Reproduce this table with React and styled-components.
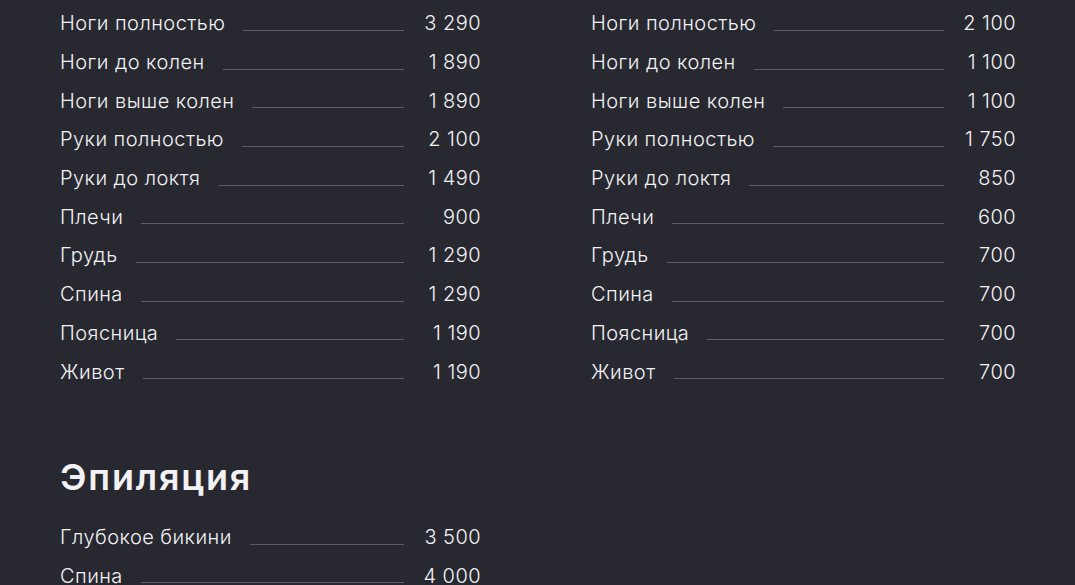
import React from "react";
import styled, { createGlobalStyle } from "styled-components";

const GlobalStyle = createGlobalStyle`
  html, body {
    margin: 0;
    padding: 0;
    background: #282831;
  }
  body {
    font-family: Inter, "Noto Sans", sans-serif;
    color: #f2f2f4;
  }
`;

const left = [
  ["Ноги полностью", "3 290"],
  ["Ноги до колен", "1 890"],
  ["Ноги выше колен", "1 890"],
  ["Руки полностью", "2 100"],
  ["Руки до локтя", "1 490"],
  ["Плечи", "900"],
  ["Грудь", "1 290"],
  ["Спина", "1 290"],
  ["Поясница", "1 190"],
  ["Живот", "1 190"],
];

const right = [
  ["Ноги полностью", "2 100"],
  ["Ноги до колен", "1 100"],
  ["Ноги выше колен", "1 100"],
  ["Руки полностью", "1 750"],
  ["Руки до локтя", "850"],
  ["Плечи", "600"],
  ["Грудь", "700"],
  ["Спина", "700"],
  ["Поясница", "700"],
  ["Живот", "700"],
];

const epil = [
  ["Глубокое бикини", "3 500"],
  ["Спина", "4 000"],
];

const Page = styled.div`
  padding: 4px 0 0 60px;
  width: 956px;
  height: 585px;
  overflow: hidden;
  box-sizing: content-box;
`;

const Columns = styled.div`
  display: grid;
  grid-template-columns: 421px 425px;
  column-gap: 110px;
`;

const List = styled.div`
  display: flex;
  flex-direction: column;
`;

const Row = styled.div`
  display: flex;
  align-items: center;
  height: 38.7px;
  font-size: 20px;
  font-weight: 300;
  letter-spacing: 0.45px;
`;

const Name = styled.span`
  white-space: nowrap;
`;

const Leader = styled.span`
  flex: 1;
  height: 1px;
  background: #5c5c66;
  margin: 14px 18px 0 18px;
`;

const Price = styled.span`
  width: ${(p) => p.$w}px;
  text-align: right;
  white-space: nowrap;
`;

const Heading = styled.h2`
  margin: 64px 0 19px;
  font-size: 36px;
  font-weight: 600;
  line-height: 44px;
  letter-spacing: 1.8px;
`;

const Section = styled.div`
  width: 421px;
`;

function PriceList({ items, priceWidth }) {
  return (
    <List>
      {items.map(([name, price], i) => (
        <Row key={i}>
          <Name>{name}</Name>
          <Leader />
          <Price $w={priceWidth}>{price}</Price>
        </Row>
      ))}
    </List>
  );
}

export default function App() {
  return (
    <>
      <GlobalStyle />
      <Page>
        <Columns>
          <PriceList items={left} priceWidth={59} />
          <PriceList items={right} priceWidth={54} />
        </Columns>
        <Section>
          <Heading>Эпиляция</Heading>
          <PriceList items={epil} priceWidth={59} />
        </Section>
      </Page>
    </>
  );
}
